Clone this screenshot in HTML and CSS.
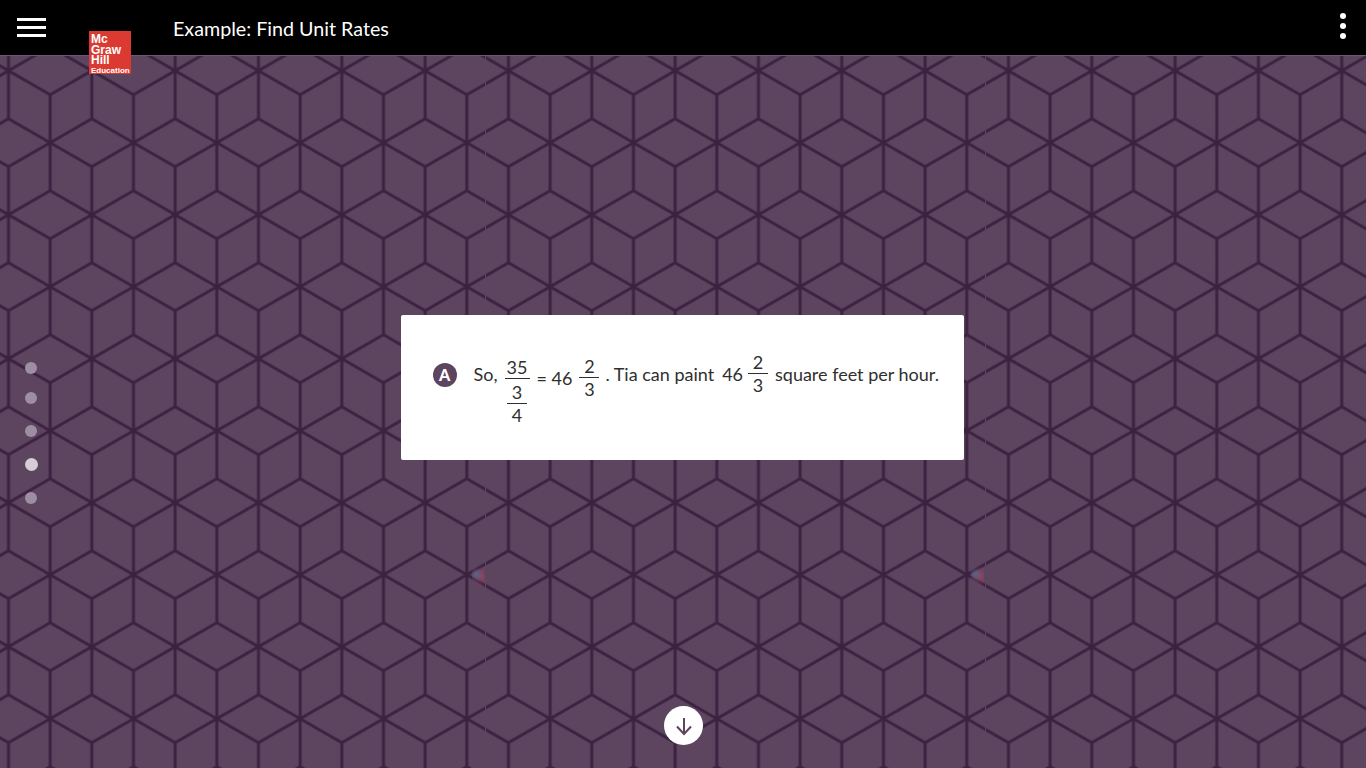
FILE: index.html
```html
<!DOCTYPE html>
<html lang="en">
<head>
  <meta charset="UTF-8" />
  <meta name="viewport" content="width=device-width, initial-scale=1.0"/>
  <title>Example: Find Unit Rates</title>
  <link rel="stylesheet" href="styles.css">
</head>
<body>

  <svg class="backdrop" width="1366" height="768" aria-hidden="true">
    <defs>
      <pattern id="cubes" width="83.33" height="144" patternUnits="userSpaceOnUse" patternTransform="translate(8.5 70.7)">
        <path d="M0 0V48L41.67 72V120L0 144M41.67 120L83.33 144M0 0L41.67 24V72M41.67 24L83.33 0M41.67 72L83.33 48V0M41.67 72L0 96V144M41.67 72L83.33 96V144" />
      </pattern>
    </defs>
    <rect width="1366" height="768" fill="url(#cubes)" />
  </svg>

  <!-- faint seams and marks left in the slide background -->
  <div class="seam seam-left"></div>
  <div class="seam seam-right"></div>
  <div class="smudge smudge-left"></div>
  <div class="smudge smudge-right"></div>

  <header class="topbar">
    <button class="menu-btn" aria-label="Menu"><span></span><span></span><span></span></button>
    <h1 class="title">Example: Find Unit Rates</h1>
    <button class="more-btn" aria-label="More"><span></span><span></span><span></span></button>
  </header>

  <div class="logo">
    <span>Mc</span>
    <span>Graw</span>
    <span>Hill</span>
    <span class="logo-small">Education</span>
  </div>

  <nav class="dots">
    <span></span>
    <span></span>
    <span></span>
    <span class="on"></span>
    <span></span>
  </nav>

  <main class="stage">
    <section class="card">
      <div class="badge">A</div>
      <div class="answer">
        <span class="so">So,</span>
        <span class="frac big">
          <span class="num">35</span>
          <span class="frac inner">
            <span class="num">3</span>
            <span class="den">4</span>
          </span>
        </span>
        <span class="eq">= 46</span>
        <span class="frac low">
          <span class="num">2</span>
          <span class="den">3</span>
        </span>
        <span class="words">. Tia can paint</span>
        <span class="mixed">46</span>
        <span class="frac high">
          <span class="num">2</span>
          <span class="den">3</span>
        </span>
        <span class="words">square feet per hour.</span>
      </div>
    </section>
  </main>

  <button class="next-btn" aria-label="Next">
    <svg width="20" height="20" viewBox="0 0 20 20"><path d="M10 2V18M3 10.500L10 18L17 10.500" /></svg>
  </button>

</body>
</html>
```
FILE: styles.css
```css
* { box-sizing: border-box; }
body {
  font-family: "Lato", "Open Sans", sans-serif;
  margin: 0;
  height: 768px;
  overflow: hidden;
  background: #5d4560;
  position: relative;
}
button {
  border: none;
  background: none;
  padding: 0;
}
.backdrop {
  position: absolute;
  top: 0;
  left: 0;
}
.backdrop path {
  fill: none;
  stroke: #3b2240;
  stroke-width: 3;
}
.seam {
  position: absolute;
  top: 56px;
  width: 1px;
  height: 680px;
  background: #5d4560;
}
.seam-left { left: 485px; }
.seam-right { left: 985px; }
.smudge {
  position: absolute;
  top: 562px;
  width: 13px;
  height: 28px;
  opacity: 0.75;
  background:
    radial-gradient(circle at 35% 45%, #5a6f96 0, transparent 40%),
    radial-gradient(circle at 70% 50%, #a0405f 0, transparent 60%);
}
.smudge-left { left: 472px; }
.smudge-right { left: 971px; }
.topbar {
  position: relative;
  height: 56px;
  background: #000;
  border-bottom: 1px solid #6d5478;
  display: flex;
  align-items: flex-start;
  padding: 18px 17px 0;
}
.menu-btn {
  width: 29px;
  display: flex;
  flex-direction: column;
  gap: 5px;
}
.menu-btn span {
  height: 3px;
  background: #fff;
}
.title {
  margin: -1px 0 0 127px;
  color: #fff;
  font-size: 19.7px;
  font-weight: 400;
  line-height: 24px;
  flex: 1;
}
.more-btn {
  width: 6px;
  margin: -5px 3px 0 0;
  display: flex;
  flex-direction: column;
  gap: 4px;
}
.more-btn span {
  width: 6px;
  height: 6px;
  border-radius: 50%;
  background: #fff;
}
.logo {
  position: absolute;
  left: 89px;
  top: 31px;
  width: 42px;
  height: 43px;
  background: #db3a32;
  color: #fff;
  font-family: "Liberation Sans", sans-serif;
  font-weight: 700;
  font-size: 12px;
  line-height: 10.500px;
  padding: 3px 0 0 2px;
  display: flex;
  flex-direction: column;
}
.logo-small {
  font-size: 8px;
  line-height: 9px;
}
.dots {
  position: absolute;
  left: 25px;
  top: 362px;
  width: 12px;
}
.dots span {
  display: block;
  width: 12px;
  height: 12px;
  margin-bottom: 21px;
  border-radius: 50%;
  background: #9e8ea2;
}
.dots span:first-child { margin-bottom: 18px; }
.dots .on {
  width: 13px;
  height: 13px;
  margin: 0 0 21px -0.500px;
  background: #d5cdd8;
}
.stage {
  display: flex;
  justify-content: center;
  padding: 259px 2px 0 0;
  position: relative;
}
.card {
  width: 563px;
  height: 145px;
  background: #fff;
  border-radius: 2px;
  padding: 35px 0 0 32px;
  display: flex;
  align-items: flex-start;
  color: #2f2f2f;
}
.badge {
  width: 24px;
  height: 24px;
  margin-top: 13px;
  border-radius: 50%;
  background: #5d4560;
  color: #fff;
  font-weight: 900;
  font-size: 16px;
  line-height: 24px;
  text-align: center;
  flex: none;
}
.answer {
  margin-left: 17px;
  display: flex;
  align-items: flex-start;
  font-size: 18px;
  line-height: 24px;
  white-space: nowrap;
}
.so { width: 25px; margin-top: 12px; }
.words { margin-top: 12px; }
.eq { margin: 16px 0 0 0; }
.mixed { margin: 12px 0 0 8px; }
.frac {
  display: flex;
  flex-direction: column;
  align-items: center;
  width: 20px;
}
.big { width: 25px; margin: 6px 7px 0 6px; }
.low { margin: 5px 6px 0 7px; }
.high { margin: 1px 7px 0 5px; }
.inner { margin-top: 2px; }
.num {
  display: block;
  width: 100%;
  text-align: center;
  line-height: 22px;
  border-bottom: 1px solid #2f2f2f;
}
.den {
  display: block;
  text-align: center;
  line-height: 22px;
}
.next-btn {
  position: absolute;
  left: 664px;
  top: 706px;
  width: 39px;
  height: 39px;
  border-radius: 50%;
  background: #fff;
  display: flex;
  align-items: center;
  justify-content: center;
}
.next-btn path {
  fill: none;
  stroke: #5d4560;
  stroke-width: 2;
}
```
